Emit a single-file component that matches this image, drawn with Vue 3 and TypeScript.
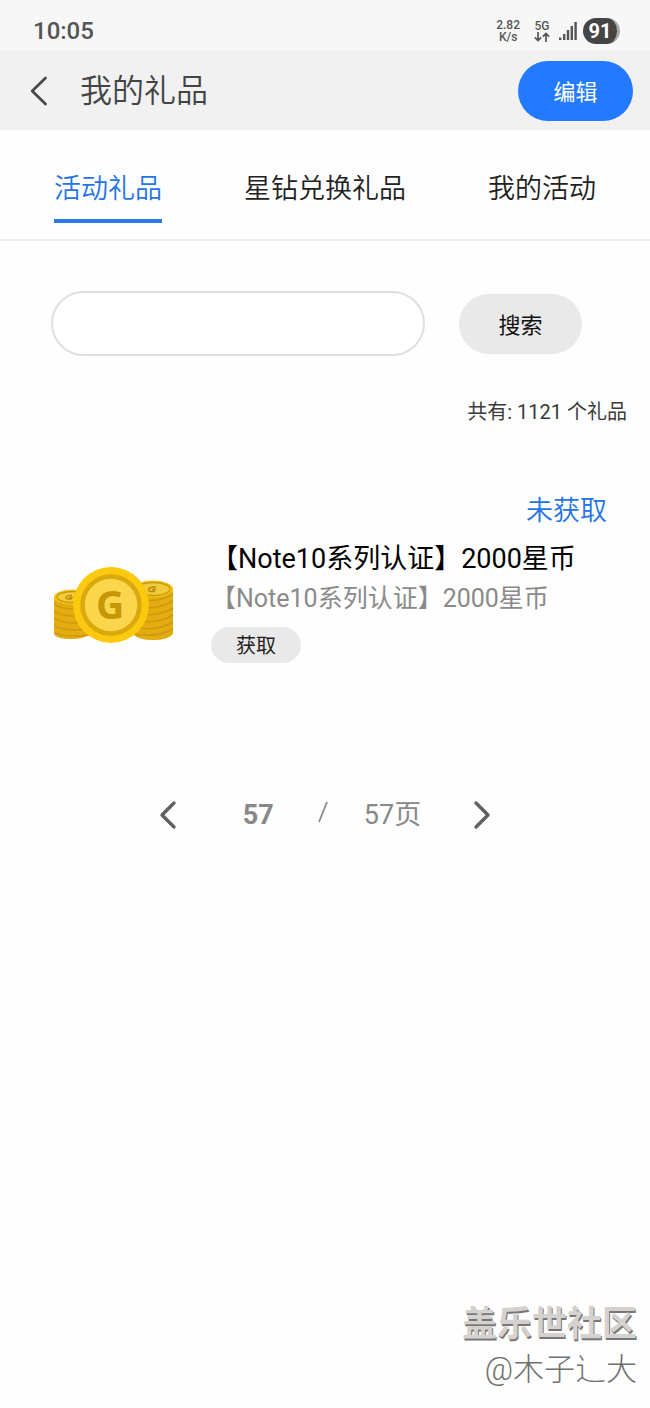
<script setup lang="ts">
import { ref } from 'vue'

interface Gift {
  title: string
  description: string
  status: string
}

const tabs: string[] = ['活动礼品', '星钻兑换礼品', '我的活动']
const activeTab = ref(0)
const keyword = ref('')
const total = 1121
const page = 57
const pageCount = 57
const battery = 91
const gifts: Gift[] = [
  { title: '【Note10系列认证】2000星币', description: '【Note10系列认证】2000星币', status: '未获取' },
]
</script>

<template>
  <div class="screen">
    <div class="status">
      <span class="time">10:05</span>
      <div class="indicators">
        <div class="speed"><span>2.82</span><span>K/s</span></div>
        <div class="network">
          <span>5G</span>
          <svg width="16" height="10" viewBox="0 0 16 10" fill="none" stroke="#555" stroke-width="1.7" aria-hidden="true">
            <path d="M4 0V8.5M0.8 5.4L4 8.6L7.2 5.4M12 10V1.5M8.8 4.6L12 1.4L15.2 4.6" />
          </svg>
        </div>
        <svg class="signal" width="18" height="18" viewBox="0 0 18 18" fill="#555" aria-hidden="true">
          <rect x="0" y="15.5" width="2.4" height="2.5" />
          <rect x="4" y="12" width="2.4" height="6" />
          <rect x="7.8" y="8" width="2.4" height="10" />
          <rect x="11.6" y="4" width="2.4" height="14" />
          <rect x="15.4" y="0" width="2.4" height="18" />
        </svg>
        <span class="battery">{{ battery }}</span>
      </div>
    </div>

    <header class="header">
      <button class="back" type="button" aria-label="返回">
        <svg width="18" height="30" viewBox="0 0 18 30" fill="none" stroke="#4a4a4a" stroke-width="2.8" stroke-linecap="round" stroke-linejoin="round">
          <path d="M15.5 2L2.2 15L15.5 28" />
        </svg>
      </button>
      <h1>我的礼品</h1>
      <button class="edit" type="button">编辑</button>
    </header>

    <nav class="tabs">
      <button
        v-for="(tab, index) in tabs"
        :key="tab"
        type="button"
        :class="['tab', { active: index === activeTab }]"
        @click="activeTab = index"
      >
        {{ tab }}
      </button>
    </nav>

    <main>
      <form class="search" @submit.prevent>
        <input v-model="keyword" type="text" aria-label="搜索礼品" />
        <button type="submit">搜索</button>
      </form>

      <p class="total">共有: {{ total }} 个礼品</p>

      <article v-for="gift in gifts" :key="gift.title" class="gift">
        <p class="state">{{ gift.status }}</p>
        <div class="gift-row">
          <svg class="coins" width="120" height="76" viewBox="0 0 120 76" aria-hidden="true">
            <path d="M0 31V67Q2 72 18 72Q30 72 36 67V31Z" fill="#e3ac10" />
            <path d="M0 37Q9 44 36 41M0 44Q9 51 36 48M0 51Q9 58 36 55M0 58Q9 65 36 62M0 65Q9 71 36 68" fill="none" stroke="#cf9a0d" stroke-width="1.5" />
            <ellipse cx="18" cy="30" rx="18" ry="7.5" fill="#f5c311" />
            <ellipse cx="18" cy="30" rx="15" ry="5.5" fill="#f3ca3c" stroke="#c79a0c" stroke-width="1.3" />
            <path d="M18 28.4Q13 28 12 30.5Q12 32.5 17 32L18 30.5H15" fill="none" stroke="#b88b08" stroke-width="1.4" />
            <path d="M79 22V67Q84 73 99 73Q114 73 119 67V22Z" fill="#e3ac10" />
            <path d="M79 32Q103 37 119 27M79 39Q103 44 119 34M79 46Q103 51 119 41M79 53Q103 58 119 48M79 60Q103 65 119 55M79 67Q103 71 119 62" fill="none" stroke="#cf9a0d" stroke-width="1.5" />
            <ellipse cx="99" cy="22" rx="20" ry="8.5" fill="#f5c311" />
            <ellipse cx="99" cy="22" rx="17" ry="6.5" fill="#f3ca3c" stroke="#c79a0c" stroke-width="1.3" />
            <path d="M102 20.2Q96 19.5 94.5 22.5Q94.5 25 100 24.4L101 22.5H98" fill="none" stroke="#b88b08" stroke-width="1.5" />
            <circle cx="57" cy="38" r="38" fill="#fbc90d" />
            <circle cx="57" cy="38" r="28.5" fill="#fbd54b" stroke="#d9a90f" stroke-width="4.5" />
            <text x="56" y="52" text-anchor="middle" class="coin-letter">G</text>
          </svg>
          <div class="info">
            <h2>{{ gift.title }}</h2>
            <p>{{ gift.description }}</p>
            <button type="button">获取</button>
          </div>
        </div>
      </article>

      <nav class="pager" aria-label="分页">
        <button type="button" aria-label="上一页">
          <svg width="18" height="30" viewBox="0 0 18 30" fill="none" stroke="#606060" stroke-width="3.4" stroke-linecap="round" stroke-linejoin="round">
            <path d="M15 3L3 15L15 27" />
          </svg>
        </button>
        <div class="pages">
          <strong>{{ page }}</strong>
          <svg width="10" height="22" viewBox="0 0 10 22" stroke="#8b8b8b" stroke-width="1.8" aria-hidden="true">
            <path d="M1 21L9 1" />
          </svg>
          <span>{{ pageCount }}页</span>
        </div>
        <button type="button" aria-label="下一页">
          <svg width="18" height="30" viewBox="0 0 18 30" fill="none" stroke="#606060" stroke-width="3.4" stroke-linecap="round" stroke-linejoin="round">
            <path d="M3 3L15 15L3 27" />
          </svg>
        </button>
      </nav>
    </main>

    <footer class="credit">
      <p class="community">盖乐世社区</p>
      <p class="author">@木子辶大</p>
    </footer>
  </div>
</template>

<style>
body {
  margin: 0;
  background: #fefefe;
}
</style>

<style scoped>
.screen {
  display: flex;
  flex-direction: column;
  min-height: 100vh;
  font-family: Roboto, "Noto Sans CJK SC", sans-serif;
  color: #222;
}
h1, h2, p {
  margin: 0;
  font-weight: 400;
}
button {
  margin: 0;
  padding: 0;
  border: 0;
  background: none;
  font: inherit;
  color: inherit;
  cursor: pointer;
}
svg {
  display: block;
}
.status {
  display: flex;
  align-items: center;
  justify-content: space-between;
  box-sizing: border-box;
  height: 51px;
  padding: 10px 30px 0 33px;
  background: #f7f7f7;
  color: #555;
}
.time {
  font: 500 24px/30px Roboto, sans-serif;
}
.indicators {
  display: flex;
  align-items: center;
}
.speed, .network {
  display: flex;
  flex-direction: column;
  align-items: center;
  font-size: 12px;
  line-height: 12px;
  font-weight: 500;
}
.speed {
  margin-right: 14px;
}
.network {
  margin-right: 9px;
}
.battery {
  box-sizing: border-box;
  width: 37px;
  margin-left: 6px;
  border-right: 3px solid #aaa;
  border-radius: 13px;
  background: #454545;
  color: #fff;
  font-size: 20px;
  line-height: 26px;
  font-weight: 700;
  text-align: center;
}
.header {
  display: flex;
  align-items: center;
  height: 79px;
  padding: 0 17px 0 30px;
  background: #f1f1f1;
}
.back {
  width: 50px;
}
.header h1 {
  flex: 1;
  color: #444;
  font-size: 32px;
  font-weight: 350;
  line-height: 40px;
}
.edit {
  width: 115px;
  height: 60px;
  padding-bottom: 2px;
  border-radius: 30px;
  background: #247aff;
  color: #fff;
  font-size: 22px;
}
.tabs {
  display: flex;
  justify-content: space-between;
  align-items: flex-start;
  padding: 38px 54px 16px;
  border-bottom: 2px solid #efefef;
}
.tab {
  padding-bottom: 9px;
  border-bottom: 4px solid transparent;
  font-size: 27px;
  font-weight: 350;
  line-height: 42px;
}
.tab.active {
  border-color: #2f79e4;
  color: #2574e6;
}
.search {
  display: flex;
  align-items: center;
  gap: 34px;
  padding: 50px 68px 0 51px;
}
.search input {
  flex: 1;
  min-width: 0;
  box-sizing: border-box;
  height: 65px;
  padding: 0 28px;
  border: 2px solid #dfdfdf;
  border-radius: 33px;
  background: #fff;
  font: inherit;
  font-size: 22px;
  outline: none;
}
.search button {
  width: 123px;
  height: 60px;
  padding-bottom: 2px;
  border-radius: 30px;
  background: #e9e9e9;
  color: #111;
  font-size: 22px;
}
.total {
  padding: 41px 23px 0 0;
  color: #3a3a3a;
  font-size: 20px;
  line-height: 30px;
  text-align: right;
}
.gift {
  padding: 64px 43px 0 54px;
}
.state {
  color: #2574e6;
  font-size: 27px;
  font-weight: 350;
  line-height: 40px;
  text-align: right;
}
.gift-row {
  display: flex;
  align-items: flex-start;
  gap: 37px;
  padding-top: 8px;
}
.coins {
  flex: none;
  margin-top: 28px;
}
.coin-letter {
  fill: #c69708;
  font: 700 39px "Open Sans", sans-serif;
}
.info h2 {
  color: #000;
  font-size: 27px;
  line-height: 40px;
}
.info p {
  color: #8a8a8a;
  font-size: 25px;
  line-height: 40px;
}
.info button {
  width: 90px;
  height: 36px;
  margin-top: 8px;
  padding-bottom: 2px;
  border-radius: 18px;
  background: #e9e9e9;
  font-size: 20px;
}
.pager {
  display: flex;
  justify-content: center;
  align-items: center;
  gap: 52px;
  padding-top: 132px;
}
.pages {
  display: flex;
  align-items: flex-start;
  gap: 36px;
  padding-left: 14px;
  color: #888;
  font-size: 27px;
  line-height: 40px;
}
.pages svg {
  margin-top: 6px;
}
.pages strong {
  padding-right: 8px;
}
.credit {
  margin-top: auto;
  padding: 0 13px 16px;
  text-align: right;
}
.community {
  color: #d5d1ce;
  font-size: 35px;
  line-height: 46px;
  font-weight: 700;
  text-shadow: 1px 2px 0 #777;
}
.author {
  color: #707070;
  font-size: 31px;
  font-weight: 300;
  line-height: 44px;
}
</style>
